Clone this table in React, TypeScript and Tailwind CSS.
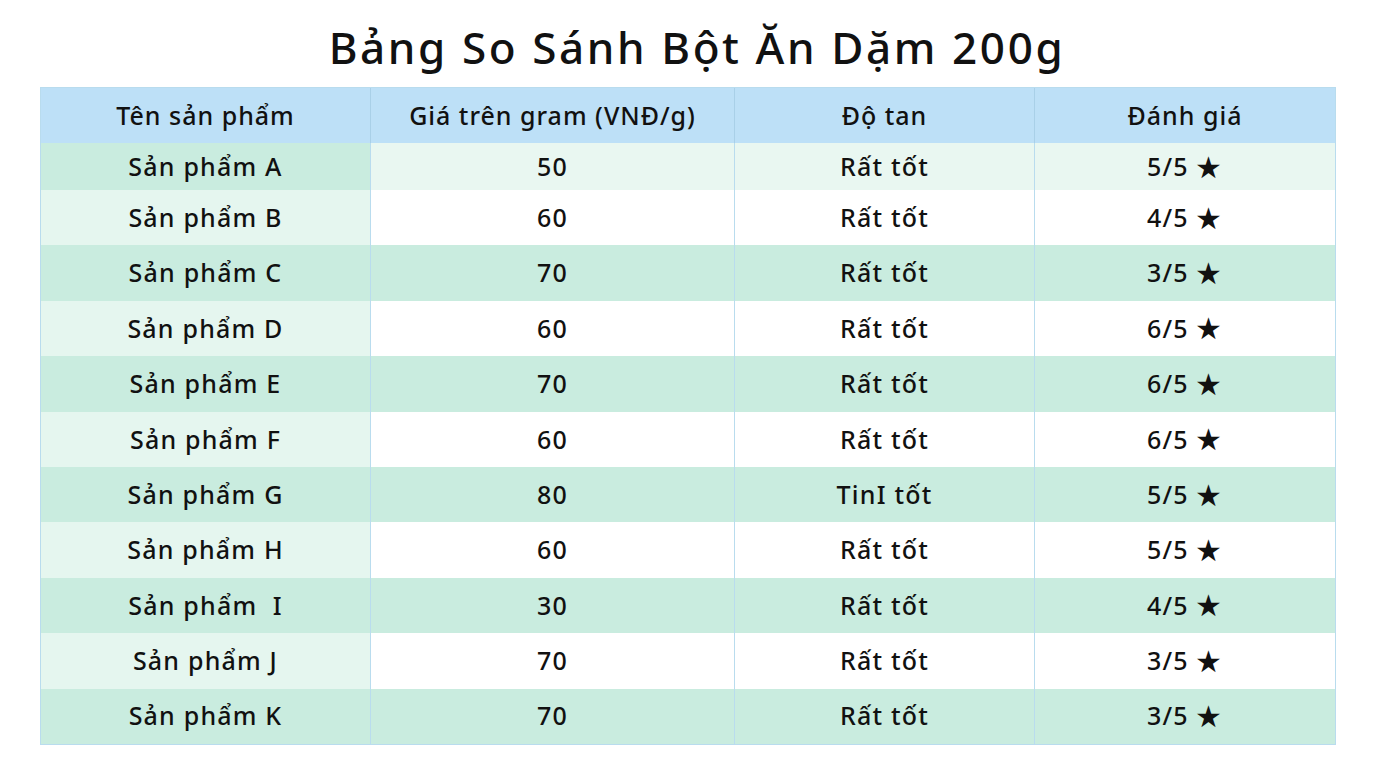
const rows = [
  ["Sản phẩm A", "50", "Rất tốt", "5/5"],
  ["Sản phẩm B", "60", "Rất tốt", "4/5"],
  ["Sản phẩm C", "70", "Rất tốt", "3/5"],
  ["Sản phẩm D", "60", "Rất tốt", "6/5"],
  ["Sản phẩm E", "70", "Rất tốt", "6/5"],
  ["Sản phẩm F", "60", "Rất tốt", "6/5"],
  ["Sản phẩm G", "80", "TinI tốt", "5/5"],
  ["Sản phẩm H", "60", "Rất tốt", "5/5"],
  ["Sản phẩm  I", "30", "Rất tốt", "4/5"],
  ["Sản phẩm J", "70", "Rất tốt", "3/5"],
  ["Sản phẩm K", "70", "Rất tốt", "3/5"],
];

const headers = ["Tên sản phẩm", "Giá trên gram (VNĐ/g)", "Độ tan", "Đánh giá"];
const cols = "grid grid-cols-[330px_364px_300px_1fr]";

function rowBg(i: number, col: number) {
  if (i === 0) return col === 0 ? "bg-[#c9ecdf]" : "bg-[#e9f7f1]";
  if (i % 2 === 0) return "bg-[#c9ecdf]";
  return col === 0 ? "bg-[#e5f6ef]" : "bg-white";
}

export default function App() {
  return (
    <div
      className="w-[1376px] h-[768px] bg-white text-[#111] flex flex-col items-center"
      style={{ fontFamily: '"Noto Sans", "Open Sans", sans-serif' }}
    >
      <h1 className="mt-[16px] ml-[18px] h-[62px] text-[44px] leading-[62px] font-medium tracking-[2.6px]">
        Bảng So Sánh Bột Ăn Dặm 200g
      </h1>
      <div className="mt-[9px] w-[1296px] border border-[#b9dcee]">
        <div className={`${cols} h-[55px] bg-[#bde0f7] text-[25px] font-medium tracking-[1px]`}>
          {headers.map((h, c) => (
            <div
              key={h}
              className={`flex items-center justify-center ${c < 3 ? "border-r border-[#a9d0e8]" : ""}`}
            >
              {h}
            </div>
          ))}
        </div>
        {rows.map((r, i) => (
          <div
            key={i}
            className={`${cols} ${i === 0 ? "h-[47px]" : "h-[55.4px]"} text-[25px] font-medium tracking-[1.2px]`}
          >
            {r.map((v, c) => (
              <div
                key={c}
                className={`flex items-center justify-center whitespace-pre ${rowBg(i, c)} ${c < 3 ? "border-r border-[#b9dcee]" : ""}`}
              >
                {v}
                {c === 3 && <span className="ml-[6px] text-[30px] leading-none">★</span>}
              </div>
            ))}
          </div>
        ))}
      </div>
    </div>
  );
}
